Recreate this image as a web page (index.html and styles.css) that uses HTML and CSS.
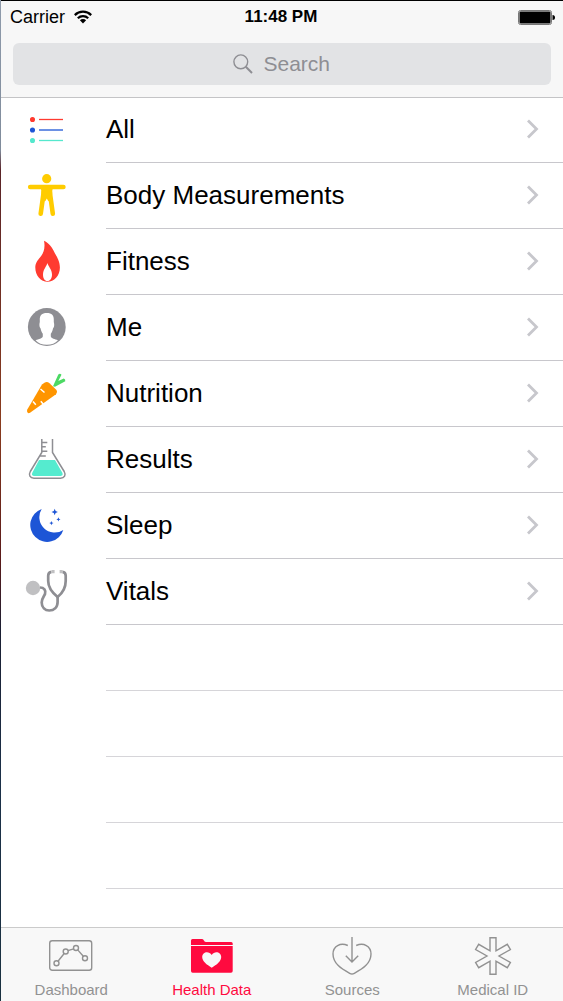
FILE: index.html
```html
<!DOCTYPE html>
<html lang="en">
<head>
<meta charset="utf-8">
<meta name="viewport" content="width=device-width, initial-scale=1">
<title>Health Data</title>
<link rel="stylesheet" href="styles.css">
</head>
<body>
<div class="app">
  <header class="header">
    <div class="status">
      <div class="carrier">
        <span>Carrier</span>
        <svg class="wifi" viewBox="0 0 18 14" aria-hidden="true">
          <path d="M.8 5.1a11.6 11.6 0 0 1 16.4 0M3.8 8.2a7.4 7.4 0 0 1 10.4 0" fill="none" stroke="#000" stroke-width="2.2"/>
          <path d="M9 13.4 5.9 10.3a4.4 4.4 0 0 1 6.2 0z"/>
        </svg>
      </div>
      <time class="time">11:48 PM</time>
      <svg class="battery" viewBox="0 0 38 15" aria-label="Battery full">
        <rect x=".5" y=".5" width="33" height="14" rx="2" fill="none" stroke="#777"/>
        <rect x="1.5" y="1.5" width="31" height="12" rx="1"/>
        <path d="M34.500 5a2.500 2.500 0 0 1 0 5z"/>
      </svg>
    </div>
    <label class="search">
      <svg class="search-icon" viewBox="0 0 20 20" fill="none" stroke="#8e8e93" aria-hidden="true">
        <circle cx="7.8" cy="7.8" r="6.9" stroke-width="1.4"/>
        <path d="m12.8 12.8 6.2 6.2" stroke-width="2"/>
      </svg>
      <input class="search-input" type="text" placeholder="Search" aria-label="Search">
    </label>
  </header>

  <main class="content">
    <ul class="list">
      <li class="row"><a class="row-link" href="#all">
        <svg class="icon" viewBox="0 0 49 49" stroke-width="1.3">
          <g fill="#ff3b30" stroke="#ff3b30"><circle cx="9.5" cy="14.5" r="1.9"/><path d="M16 14.5h24"/></g>
          <g fill="#1d55d6" stroke="#1d55d6"><circle cx="9.5" cy="25" r="1.9"/><path d="M16 25h24"/></g>
          <g fill="#55e8cd" stroke="#55e8cd"><circle cx="9.5" cy="35.5" r="1.9"/><path d="M16 35.5h24"/></g>
        </svg>
        <span class="row-body">All<svg class="chevron" viewBox="0 0 12 20"><path d="m1 1.5 8.5 8.5L1 18.5"/></svg></span>
      </a></li>
      <li class="row"><a class="row-link" href="#body">
        <svg class="icon" viewBox="0 0 49 49" fill="#ffcc00">
          <circle cx="23.7" cy="7.7" r="4.6"/>
          <path d="M17 15.5h13.5Q28.8 19 29.2 23l-1 8-3-1-1.400-2.500-1.400 2.500-3 1-1-8Q18.800 19 17 15.5z"/>
          <path d="M7.2 16h33.2M20.700 21l-3 21.700M26.800 21l3 21.700" fill="none" stroke="#ffcc00" stroke-width="4.6" stroke-linecap="round"/>
        </svg>
        <span class="row-body">Body Measurements<svg class="chevron" viewBox="0 0 12 20"><path d="m1 1.5 8.5 8.5L1 18.5"/></svg></span>
      </a></li>
      <li class="row"><a class="row-link" href="#fitness">
        <svg class="icon" viewBox="0 0 49 49">
          <path fill="#ff3b30" d="M21 3.700C26.500 6.500 28.800 10 30.500 13.500 32.500 18 36.900 23 36.900 30.500 36.900 39 31 44.700 24.500 44.700S12.300 39 12.300 30.500C12.300 26 14.500 23.500 17 20.500 20.500 16.500 22.500 11 21 3.700z"/>
          <path fill="#fff" d="M24.400 26c.8 3.500 4.600 6.500 4.600 11.500 0 4-1.900 6.500-4.600 6.500S20 41.500 20 37.500c0-5 3.600-8 4.400-11.500z"/>
        </svg>
        <span class="row-body">Fitness<svg class="chevron" viewBox="0 0 12 20"><path d="m1 1.5 8.5 8.5L1 18.5"/></svg></span>
      </a></li>
      <li class="row"><a class="row-link" href="#me">
        <svg class="icon" viewBox="0 0 49 49">
          <circle cx="23.8" cy="24" r="18.900" fill="#8e8e93"/>
          <path fill="#fff" d="M23.800 10c5 0 7.200 2.500 7 7-.1 1.500 0 2.500.3 3.500.3 2-.1 4-1.100 5-.5 2.500-1.200 4-2.200 5.200v2.800c.6 2 4 2.600 7.200 3.700-2.700 3-6.500 4.500-11.200 4.500s-8.500-1.500-11.200-4.500c3.200-1.100 6.600-1.700 7.200-3.700v-2.800c-1-1.200-1.700-2.700-2.200-5.200-1-1-1.400-3-1.100-5 .3-1 .4-2 .3-3.500-.2-4.500 2-7 7-7z"/>
        </svg>
        <span class="row-body">Me<svg class="chevron" viewBox="0 0 12 20"><path d="m1 1.5 8.5 8.5L1 18.5"/></svg></span>
      </a></li>
      <li class="row"><a class="row-link" href="#nutrition">
        <svg class="icon" viewBox="0 0 49 49">
          <path fill="#ff9500" d="M19 15.500 21.500 13.700Q24 12.300 26.500 14.200L33.500 21Q35 23.300 33 25.300L7 43.800Q5.500 44.600 4.500 43.600 3.600 42.500 4.300 40.500z"/>
          <path d="m17.500 20 4 3.500M10 32.500l2.800 3.200M20.500 35.500l-2.700-3.300" fill="none" stroke="#fff" stroke-width="1.500"/>
          <path fill="#4cd964" d="M30 17.200 35.300 5.600Q36.800 3.800 38.500 5.700L35.300 12 40.800 9.500Q42.600 10 42.300 12.200L32 17.700z"/>
        </svg>
        <span class="row-body">Nutrition<svg class="chevron" viewBox="0 0 12 20"><path d="m1 1.5 8.5 8.5L1 18.5"/></svg></span>
      </a></li>
      <li class="row"><a class="row-link" href="#results">
        <svg class="icon" viewBox="0 0 49 49">
          <path fill="#55ebcf" d="M16 25h16l7.300 12.800q1.200 2.700-1.500 3.200H10.800q-2.700-.5-1.500-3.200z"/>
          <path fill="none" stroke="#8e8e93" stroke-width="1.500" d="M18.800 4v13.500L7.300 36.500c-2 3.500-.3 6.800 3.700 6.800h26.500c4 0 5.700-3.300 3.700-6.800L29.500 17.500V4M18.800 7.400h5.500M18.800 11.700h4M18.800 16.300h5.500M16.500 21h6.300"/>
        </svg>
        <span class="row-body">Results<svg class="chevron" viewBox="0 0 12 20"><path d="m1 1.5 8.5 8.5L1 18.5"/></svg></span>
      </a></li>
      <li class="row"><a class="row-link" href="#sleep">
        <svg class="icon" viewBox="0 0 49 49" fill="#1d55d6">
          <path d="M18.700 8A16.900 16.900 0 1 0 40.300 29 15.400 15.400 0 0 1 18.700 8z"/>
          <path d="m31.700 7.800.9 2.300 2.300.9-2.300.9-.9 2.300-.9-2.300-2.300-.9 2.300-.9zM35.400 16.300l.6 1.500 1.500.6-1.500.6-.6 1.500-.6-1.500-1.500-.6 1.500-.6zM28.400 20l.6 1.500 1.500.6-1.500.6-.6 1.500-.6-1.500-1.500-.6 1.500-.6z"/>
        </svg>
        <span class="row-body">Sleep<svg class="chevron" viewBox="0 0 12 20"><path d="m1 1.5 8.5 8.5L1 18.5"/></svg></span>
      </a></li>
      <li class="row"><a class="row-link" href="#vitals">
        <svg class="icon" viewBox="0 0 49 49" fill="none" stroke="#8e8e93" stroke-width="2.700">
          <circle cx="10" cy="21" r="7.200" fill="#c0c0c2" stroke="none"/>
          <path d="M17 20.500c4 0 6.200 2.700 5 6.500-.7 2.200-3.300 4.500-3.300 8.500 0 5 3.300 8 7.500 8 4.800 0 8.400-3 8.400-8.500v-6"/>
          <path d="M28.500 4.800c-2.300.2-3.300 1.500-3.300 4V14c0 6 4.400 12 9.400 16 5-4 8.100-10 8.100-16V8.800c0-2.500-1-3.800-3.300-4"/>
          <path d="M31.600 4.700h-3M36.600 4.700h3" stroke="#c0c0c2" stroke-width="3.200"/>
        </svg>
        <span class="row-body">Vitals<svg class="chevron" viewBox="0 0 12 20"><path d="m1 1.5 8.5 8.5L1 18.5"/></svg></span>
      </a></li>
      <li class="row row-empty"></li>
      <li class="row row-empty"></li>
      <li class="row row-empty"></li>
      <li class="row row-empty"></li>
    </ul>
  </main>

  <nav class="tabs">
    <a class="tab" href="#dashboard">
      <svg class="tab-icon" viewBox="0 0 46 42">
        <rect x="1.700" y="5.700" width="42" height="29.600" rx="2.500"/>
        <circle cx="8.500" cy="28.300" r="2.500"/><circle cx="17.700" cy="16.500" r="2.500"/><circle cx="28" cy="13" r="2.500"/><circle cx="37" cy="23.200" r="2.500"/>
        <path d="m10 26.300 6.200-7.800M20 15.700l5.600-1.900M29.700 14.900l5.600 6.400"/>
      </svg>
      <span>Dashboard</span>
    </a>
    <a class="tab tab-active" href="#health" aria-current="page">
      <svg class="tab-icon tab-icon-solid" viewBox="0 0 46 42">
        <path d="M2 10V5.500Q2 4 3.500 4H12.700q1.500 0 2.200 1.400Q15.700 7 17.200 7H42.200Q43.700 7 43.700 8.500V10z"/>
        <path fill-rule="evenodd" d="M2 11H43.700V36q0 1.700-1.700 1.700H3.700Q2 37.700 2 36zM22.700 32.700c5-3 9.500-6.400 9.500-10.700 0-5.200-6.700-6.700-9.500-2-2.800-4.700-9.500-3.200-9.500 2 0 4.300 4.500 7.700 9.500 10.700z"/>
      </svg>
      <span>Health Data</span>
    </a>
    <a class="tab" href="#sources">
      <svg class="tab-icon" viewBox="0 0 46 42">
        <path d="M18.800 10.500C11.500 7.300 4 11 4 19c0 9.500 8.500 15 16.700 19.300q2.300 1.300 4.600 0C33.500 34 42 28.500 42 19c0-8-7.500-11.700-14.800-8.500M23 2v25M16.800 20.800l6.200 6.300 6.200-6.300"/>
      </svg>
      <span>Sources</span>
    </a>
    <a class="tab" href="#medical">
      <svg class="tab-icon" viewBox="-23 -21 46 42">
        <path d="M-3-18.300H3V-5.200L14.300-11.700 17.400-6.500 6 0 17.400 6.500 14.300 11.700 3 5.200V18.300H-3V5.200L-14.300 11.700-17.400 6.500-6 0-17.400-6.500-14.300-11.700-3-5.200z"/>
      </svg>
      <span>Medical ID</span>
    </a>
  </nav>
</div>
</body>
</html>
```
FILE: styles.css
```css
* {
  box-sizing: border-box;
}

body {
  margin: 0;
  padding-left: 1px;
  background: linear-gradient(#8f9bab 0, #7f8b9b 15%, #5a2428 17%, #8a3c1f 42%, #5a1a1a 56%, #1a1f33 63%, #1c3048 78%, #1a3040 100%);
  font-family: "Liberation Sans", Arial, sans-serif;
  color: #000;
}

.app {
  display: flex;
  flex-direction: column;
  height: 100vh;
  background: #fff;
  border-top: 1px solid #000;
}

.header {
  padding: 0 12px 12px;
  background: #f7f7f7;
  border-bottom: 1px solid #c4c4c6;
}

.status {
  display: grid;
  grid-template-columns: 1fr auto 1fr;
  align-items: center;
  height: 32px;
  margin: 0 -5px 10px -3px;
}

.carrier {
  display: flex;
  align-items: center;
  gap: 9px;
  font-size: 18px;
}

.wifi {
  width: 18px;
  height: 14px;
}

.time {
  margin-right: 4px;
  font-size: 17px;
  font-weight: bold;
}

.battery {
  justify-self: end;
  width: 38px;
  height: 15px;
}

.search {
  display: flex;
  align-items: center;
  justify-content: center;
  gap: 11px;
  height: 42px;
  border-radius: 6px;
  background: #e2e3e5;
}

.search-icon {
  width: 20px;
  height: 20px;
}

.search-input {
  width: 68px;
  padding: 0;
  border: 0;
  outline: 0;
  background: transparent;
  font: 21px/28px "Liberation Sans", Arial, sans-serif;
}

.search-input::placeholder {
  color: #8e8e93;
  opacity: 1;
}

.content {
  flex: 1;
  min-height: 0;
  overflow: hidden;
}

.list {
  margin: -1px 0 0;
  padding: 0;
  list-style: none;
}

.row {
  height: 66px;
}

.row-link {
  display: flex;
  align-items: center;
  height: 100%;
  padding-left: 22px;
  color: inherit;
  text-decoration: none;
}

.icon {
  flex: none;
  width: 49px;
  height: 49px;
  margin: 0 34px 2px 0;
}

.row-body {
  display: flex;
  flex: 1;
  align-items: center;
  justify-content: space-between;
  height: 100%;
  padding-right: 24px;
  border-bottom: 1px solid #c8c7cc;
  font-size: 26px;
}

.row-empty {
  margin-left: 105px;
  border-bottom: 1px solid #d6d5d9;
}

.chevron {
  width: 12px;
  height: 20px;
  margin-bottom: 2px;
  fill: none;
  stroke: #c7c7cc;
  stroke-width: 2.8;
}

.tabs {
  display: flex;
  background: #f8f8f8;
  border-top: 1px solid #cbcbcb;
}

.tab {
  display: flex;
  flex: 1;
  flex-direction: column;
  align-items: center;
  gap: 3px;
  padding: 7px 0 1px;
  color: #929292;
  font-size: 15px;
  line-height: 20px;
  text-decoration: none;
}

.tab-active {
  color: #ff0a3f;
}

.tab-icon {
  width: 46px;
  height: 42px;
  fill: none;
  stroke: currentColor;
  stroke-width: 1.4;
}

.tab-icon-solid {
  fill: currentColor;
  stroke: none;
}
```
